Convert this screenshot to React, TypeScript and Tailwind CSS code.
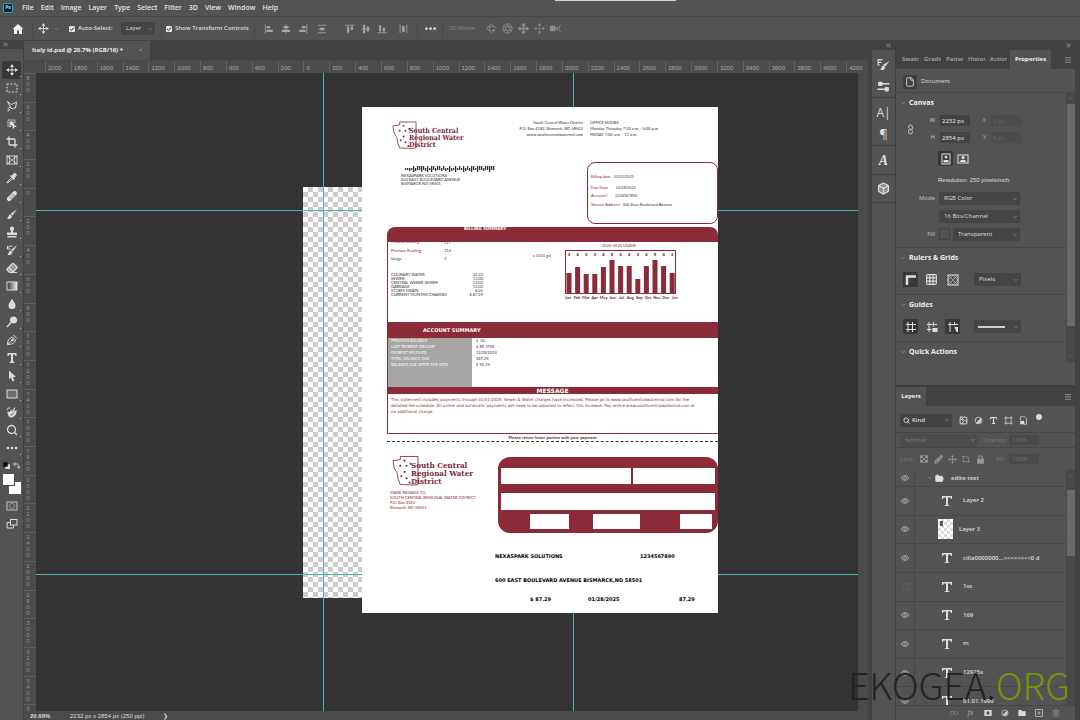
import React from "react";
import {
  Aperture,
  Box,
  Brush,
  ChevronDown,
  ChevronsLeft,
  ChevronsRight,
  Crop,
  Eraser,
  File,
  FolderOpen,
  Grid3x3,
  Image as ImageIcon,
  Link,
  Lock,
  Menu,
  Move,
  Rotate3d,
  Search,
  Trash2,
  Type,
} from "lucide-react";

const ui = "font-['Open_Sans','Noto_Sans',sans-serif]";
const small = "font-['Lato','Liberation_Sans',sans-serif]";

function Icon({ children, size = "size-3" }: { children: React.ReactNode; size?: string }) {
  return (
    <svg viewBox="0 0 24 24" fill="none" stroke="currentColor" strokeWidth="2" className={size} aria-hidden="true">
      {children}
    </svg>
  );
}

const F = { fill: "currentColor", stroke: "none" };

const MoveIcon = ({ size }: { size?: string }) => (
  <Icon size={size}>
    <path d="M12 5v14M5 12h14" />
    <path {...F} d="M12 0l4 6H8zM12 24l4-6H8zM0 12l6-4v8zM24 12l-6-4v8z" />
  </Icon>
);

const tools: { name: string; icon: React.ReactNode; active?: boolean }[] = [
  { name: "Move", active: true, icon: <MoveIcon /> },
  { name: "Marquee", icon: <Icon><rect x="2" y="4" width="20" height="16" strokeDasharray="4 3" /></Icon> },
  { name: "Lasso", icon: <Icon><path d="M3 3l8 6 10-5-2 12-9 1-7-14zM8 15c-5 0-5 4-1 4 0 2-2 3-4 3" /></Icon> },
  { name: "Object selection", icon: <Icon><path d="M10 17H4V4h14v6" strokeDasharray="4 2" /><rect {...F} x="7" y="7" width="8" height="8" /><path {...F} d="M12 9l10 9h-5l-3 5z" /></Icon> },
  { name: "Crop", icon: <Crop className="size-3" strokeWidth={2.6} /> },
  { name: "Frame", icon: <Icon><rect x="2" y="4" width="20" height="16" /><path d="M2 4l20 16M22 4L2 20M7 4v16M17 4v16" strokeWidth="1.5" /></Icon> },
  { name: "Eyedropper", icon: <Icon><path {...F} d="M15 3c3-3 8 1 6 5l-4 4 1 2-2 2-8-8 2-2 2 1z" /><path d="M11 11l-7 7-2 4 4-2 8-7" /></Icon> },
  { name: "Healing brush", icon: <Icon><path {...F} d="M2 16L15 3c3-3 9 3 6 6L8 22c-3 2-8-3-6-6z" /><path d="M10 11l4 4M13 8l4 4M7 14l4 4" stroke="#535353" strokeWidth="1.4" /></Icon> },
  { name: "Brush", icon: <Icon><path {...F} d="M22 2l-9 13-4-3zM8 13l4 3c0 5-5 6-10 6 3-3 2-8 6-9z" /></Icon> },
  { name: "Clone stamp", icon: <Icon><path {...F} d="M8 3c2-3 7-2 8 1 1 4-3 5-2 9h8v5H2v-5h8c1-4-3-6-2-10zM3 20h18v3H3z" /></Icon> },
  { name: "History brush", icon: <Icon><path {...F} d="M22 2l-8 13-4-3zM9 13l4 3c0 5-5 6-10 6 3-3 2-8 6-9z" /><path d="M3 4v6h6M3 9c2-5 7-6 10-4" /></Icon> },
  { name: "Eraser", icon: <Eraser className="size-3" strokeWidth={2.4} fill="#999" /> },
  { name: "Gradient", icon: <Icon><defs><linearGradient id="tool-gradient"><stop stopColor="#333" /><stop offset="1" stopColor="#eee" /></linearGradient></defs><rect x="2" y="4" width="20" height="16" fill="url(#tool-gradient)" /></Icon> },
  { name: "Blur", icon: <Icon><path {...F} d="M12 1c3 7 7 9 7 14a7 7 0 0 1-14 0c0-5 4-7 7-14z" /></Icon> },
  { name: "Dodge", icon: <Icon><circle {...F} cx="15" cy="8" r="7" /><path d="M10 13l-8 9" strokeWidth="3" /></Icon> },
  { name: "Pen", icon: <Icon><path d="M3 21c0-8 3-13 10-15l6 6c-2 7-8 9-16 9zM3 21l9-8M15 2l7 7" /><circle {...F} cx="13" cy="12" r="2.5" /></Icon> },
  { name: "Text", icon: <Icon><path {...F} d="M3 2h18v6h-2l-1-3h-4v14l3 1v2H7v-2l3-1V5H6L5 8H3z" /></Icon> },
  { name: "Path selection", icon: <Icon><path {...F} d="M6 1l14 13h-6l3 7-4 2-3-8-4 4z" /></Icon> },
  { name: "Rectangle", icon: <Icon><rect x="2" y="4" width="20" height="16" fill="#6b6b6b" /></Icon> },
  { name: "Rotate view", icon: <Icon><path {...F} d="M3 11l5 1 2-6 2 5 5-9 1 2-2 7 5-3c1 7-3 14-10 15-5 0-8-5-8-12z" /><path d="M8 4C5 3 3 5 2 8M8 17c3 1 6-1 7-4" stroke="#dcdcdc" /><path d="M9 18c4 0 6-3 6-5" stroke="#535353" /></Icon> },
  { name: "Zoom", icon: <Search className="size-3" strokeWidth={2.6} /> },
  { name: "More tools", icon: <Icon><circle {...F} cx="4" cy="12" r="2.6" /><circle {...F} cx="12" cy="12" r="2.6" /><circle {...F} cx="20" cy="12" r="2.6" /></Icon> },
];

function Sep() {
  return <span className="h-4 w-px shrink-0 bg-[#484848]" />;
}

function Check({ label }: { label: string }) {
  return (
    <label className="flex items-center gap-[3px] text-[6px] font-semibold whitespace-nowrap">
      <span className="relative flex size-[6px]">
        <input type="checkbox" defaultChecked className="size-[6px] appearance-none rounded-[1px] bg-[#e6e6e6]" />
        <svg viewBox="0 0 6 6" className="pointer-events-none absolute inset-0" aria-hidden="true">
          <path d="M1 3l1.500 1.500L5 1.500" fill="none" stroke="#333" />
        </svg>
      </span>
      <span>{label}</span>
    </label>
  );
}

function Select({ value, label, className = "" }: { value: string; label: string; className?: string }) {
  return (
    <span className={`relative flex h-[13px] items-center rounded-[1px] bg-[#454545] ${className}`}>
      <select aria-label={label} className="h-full w-full appearance-none bg-transparent pl-[5px] text-[6px] leading-[13px] outline-none">
        <option>{value}</option>
      </select>
      <ChevronDown className="pointer-events-none absolute right-[2px] size-[6px] text-[#aaa]" />
    </span>
  );
}

const alignIcons: [string, React.ReactNode][] = [
  ["Align left", <><path d="M3 1v22" /><path {...F} d="M6 5h9v5H6zM6 14h15v5H6z" /></>],
  ["Align center", <><path d="M12 1v22" /><path {...F} d="M6 5h12v5H6zM2 14h20v5H2z" /></>],
  ["Align right", <><path d="M21 1v22" /><path {...F} d="M9 5h9v5H9zM3 14h15v5H3z" /></>],
  ["Distribute", <><path d="M2 3h20M2 21h20" /><path {...F} d="M6 9h12v6H6z" /></>],
  ["Align top", <><path d="M1 3h22" /><path {...F} d="M5 6h5v15H5zM14 6h5v9h-5z" /></>],
  ["Align middle", <><path d="M1 12h22" /><path {...F} d="M5 2h5v20H5zM14 6h5v12h-5z" /></>],
  ["Align bottom", <><path d="M1 21h22" /><path {...F} d="M5 3h5v15H5zM14 9h5v9h-5z" /></>],
  ["Distribute horizontally", <><path d="M5 2v20M21 2v20" /><path {...F} d="M10 5h6v14h-6z" /></>],
];

function AlignButton({ index }: { index: number }) {
  return (
    <button aria-label={alignIcons[index][0]} className="flex w-4 justify-center text-[#a6a6a6]">
      <Icon size="size-[10px]">{alignIcons[index][1]}</Icon>
    </button>
  );
}

function TopBars() {
  const menus = ["File", "Edit", "Image", "Layer", "Type", "Select", "Filter", "3D", "View", "Window", "Help"];
  return (
    <header className="shrink-0 bg-[#535353]">
      <nav className="relative flex h-[17px] items-center border-b border-[#484848] pl-[3px]">
        <span className="flex size-[10px] items-center justify-center rounded-[2px] border border-[#2aa5b5] bg-[#001d33] text-[5px] font-bold text-[#8fd8ff]">Ps</span>
        <ul className="ml-[9px] flex gap-[7px] text-[7px] font-semibold text-[#e4e4e4]">
          {menus.map((m) => (
            <li key={m} className="flex">
              <button>{m}</button>
            </li>
          ))}
        </ul>
        <span className="absolute top-0 left-1/2 ml-[15px] h-px w-[121px] bg-[#d5d5d5]" />
      </nav>
      <div className="flex h-[23px] items-center">
        <button aria-label="Home" className="flex w-[32px] justify-center pl-[3px] text-[#f2f2f2]">
          <Icon size="size-[12px]"><path {...F} d="M12 2L1 12h3v10h6v-7h4v7h6V12h3z" /></Icon>
        </button>
        <Sep />
        <button aria-label="Move tool options" className="ml-[5px] flex w-[28px] items-center gap-[5px]">
          <MoveIcon size="size-[11px]" />
          <ChevronDown className="size-[6px] text-[#999]" />
        </button>
        <div className="ml-[3px] w-[52px]"><Check label="Auto-Select:" /></div>
        <Select value="Layer" label="Auto-select target" className="w-[34px]" />
        <span className="w-[6px]" />
        <Sep />
        <div className="ml-[4px] w-[88px]"><Check label="Show Transform Controls" /></div>
        <Sep />
        <div className="ml-[6px] flex gap-px">
          <AlignButton index={0} /><AlignButton index={1} /><AlignButton index={2} />
        </div>
        <div className="ml-[3px] flex"><AlignButton index={3} /></div>
        <div className="ml-[12px] flex"><AlignButton index={4} /><AlignButton index={5} /><AlignButton index={6} /></div>
        <div className="mr-[6px] ml-[5px] flex"><AlignButton index={7} /></div>
        <Sep />
        <button aria-label="More options" className="flex w-[24px] justify-center">
          <Icon size="size-[11px]"><circle {...F} cx="3" cy="12" r="3" /><circle {...F} cx="12" cy="12" r="3" /><circle {...F} cx="21" cy="12" r="3" /></Icon>
        </button>
        <Sep />
        <span className="ml-[6px] w-[34px] text-[6px] text-[#858585]">3D Mode:</span>
        <div className="flex text-[#8b8b8b]">
          <button aria-label="Orbit" className="flex w-4 justify-center"><Rotate3d className="size-[11px]" /></button>
          <button aria-label="Roll" className="flex w-4 justify-center"><Aperture className="size-[11px]" /></button>
          <button aria-label="Pan" className="flex w-4 justify-center"><Move className="size-[11px]" strokeWidth={3} /></button>
          <button aria-label="Slide" className="flex w-4 justify-center">
            <Icon size="size-[11px]"><path {...F} d="M12 0l4 6H8zM12 24l4-6H8zM0 12l6-4v8zM24 12l-6-4v8zM10 10h4v4h-4z" /></Icon>
          </button>
          <button aria-label="Camera" className="flex w-4 justify-center">
            <Icon size="size-[11px]"><path {...F} d="M0 6h12v12H0zM12 12l5-5v10z" /><path d="M23 4l-4 8 4 8" /></Icon>
          </button>
        </div>
      </div>
    </header>
  );
}

function Toolbar() {
  return (
    <aside className="flex w-[24px] shrink-0 flex-col border-r border-[#404040] bg-[#535353]">
      <div className="flex h-[9px] items-center bg-[#424242] pl-[2px]">
        <ChevronsRight className="size-[7px] text-[#ccc]" />
      </div>
      <div className="h-[12px]" />
      {tools.map((t) => (
        <button
          key={t.name}
          aria-label={t.name}
          className={`relative mx-[2px] flex h-[18px] items-center justify-center rounded-[2px] text-[#dcdcdc] ${t.active ? "bg-[#383838]" : ""}`}
        >
          {t.icon}
          <span className="absolute right-0 bottom-[2px] size-px bg-[#bbb]" />
        </button>
      ))}
      <div className="flex h-[16px] items-center justify-around px-[2px]">
        <Icon size="size-[7px]"><rect {...F} x="8" y="8" width="16" height="16" /><rect x="1" y="1" width="15" height="15" fill="#000" stroke="none" /></Icon>
        <Icon size="size-[7px]"><path d="M3 7h12q5 0 5 12M8 1L2 7l6 6M14 16l6 6 4-6" strokeWidth="3" /></Icon>
      </div>
      <div className="relative ml-[3px] h-[24px] w-[18px]">
        <span className="absolute right-0 bottom-[3px] size-[12px] bg-white" />
        <span className="absolute top-[1px] left-0 size-[12px] border-r border-b border-[#444] bg-white" />
      </div>
      <button aria-label="Quick mask" className="flex h-[18px] items-center justify-center text-[#c4c4c4]">
        <Icon><rect x="2" y="4" width="20" height="16" /><circle cx="12" cy="12" r="5" strokeDasharray="2 1" /></Icon>
      </button>
      <button aria-label="Screen mode" className="flex h-[18px] items-center justify-center text-[#dcdcdc]">
        <Icon><rect x="9" y="3" width="13" height="11" /><path d="M15 14v6H2V9h7" /></Icon>
      </button>
    </aside>
  );
}

function Logo({ large = false }: { large?: boolean }) {
  return (
    <div className="relative flex text-[#7d2632]">
      <svg viewBox="0 0 26 29" className={large ? "h-[31px] w-[27px]" : "h-[28px] w-[25px]"} aria-hidden="true">
        <path d="M1 5l7-1V1h17v27l-4 .5-13-.5-2-5-1-6-3-5z" fill="none" stroke="#7d2632" strokeWidth=".8" />
        <g fill="#7d2632">
          <circle cx="12" cy="5" r="1" /><circle cx="8" cy="10" r="1" /><circle cx="14" cy="10" r="1" />
          <circle cx="18" cy="8" r="1" /><circle cx="12" cy="16" r="1" /><circle cx="9" cy="20" r="1" />
          <circle cx="14" cy="22" r="1" /><circle cx="17" cy="26" r="1" />
        </g>
      </svg>
      <div
        className={`absolute font-['DejaVu_Serif_Condensed','DejaVu_Serif',serif] font-bold whitespace-nowrap ${
          large ? "top-[6px] left-[19px] text-[8px] leading-[8px]" : "top-[6px] left-[17px] text-[7px] leading-[7px]"
        }`}
      >
        <p>South Central</p>
        <p>Regional Water</p>
        <p>District</p>
      </div>
    </div>
  );
}

const usage = [
  ["Jan", 3, 20], ["Feb", 4, 26], ["Mar", 3, 19], ["Apr", 3, 19], ["May", 4, 26], ["Jun", 5, 33], ["Jul", 4, 27],
  ["Aug", 4, 27], ["Sep", 2, 14], ["Oct", 4, 27], ["Nov", 5, 33], ["Dec", 4, 27], ["Jan", 3, 20],
] as const;

function UsageChart() {
  return (
    <svg viewBox="0 0 116 60" className="h-[60px] w-[116px] font-['DejaVu_Sans',sans-serif]" role="img" aria-label="Usage by month">
      <text x="56" y="5" fontSize="4" textAnchor="middle" fill="#8b2b38" className={small}>2024-2025 USAGE</text>
      <rect x="2.500" y="8.500" width="110" height="43" fill="none" stroke="#8b2b38" />
      {usage.map(([month, value, height], i) => (
        <g key={i} fill="#8b2b38">
          <rect x={3.5 + i * 8.6} y={51 - height} width="5" height={height} />
          <text x={6 + i * 8.6} y="14" fontSize="4" fontWeight="700" textAnchor="middle">{value}</text>
          <text x={5 + i * 8.9} y="57" fontSize="4" fontWeight="700" textAnchor="middle" fill="#5c1f28" className={small}>{month}</text>
        </g>
      ))}
    </svg>
  );
}

const barcode = [2, 2, 3, 2, 5, 3, 6, 6, 5, 6, 3, 5, 2, 5, 6, 3, 6, 6, 3, 6, 3, 2, 5, 3, 2, 5, 2, 6, 2, 5, 3, 6, 3, 5, 6, 2, 5, 6, 6, 3, 6, 6, 5, 6, 6];

function Paper() {
  return (
    <article className={`absolute top-[34px] left-[326px] w-[356px] overflow-hidden bg-white pb-[11px] text-[4px] text-[#333] ${small}`}>
      <div className="flex h-[55px] pt-[14px]">
        <div className="w-[120px] pl-[30px]"><Logo /></div>
        <div className="-mt-[1px] w-[101px] text-right leading-[6px] whitespace-nowrap">
          <p>South Central Water District</p>
          <p>P.O. Box 4182, Bismarck, ND 58502</p>
          <p>www.southcentralwatermd.com</p>
        </div>
        <div className="-mt-[1px] pl-[7px] leading-[6px] whitespace-nowrap">
          <p>OFFICE HOURS</p>
          <p>Monday-Thursday 7:30 a.m. - 5:00 p.m.</p>
          <p>FRIDAY 7:00 a.m. - 11 a.m.</p>
        </div>
      </div>
      <div className="flex justify-between">
        <div className="pt-[3px] pl-[39px]">
          <svg viewBox="0 0 91 8" className="ml-[4px] h-[8px] w-[91px]" aria-hidden="true">
            {barcode.map((h, i) => (
              <rect key={i} x={i * 2} y={h > 4 ? 1 : 3} width="1.300" height={h > 5 ? 4 : h > 3 ? 6 : h} fill="#333" />
            ))}
          </svg>
          <address className="pt-px leading-[4px] not-italic">
            <p>NEXASPARK SOLUTIONS</p>
            <p>600 EAST BOULEVARD AVENUE</p>
            <p>BISMARCK ND 58501</p>
          </address>
        </div>
        <dl className="grid h-[62px] w-[131px] content-start rounded-[8px] border border-[#8b2b38] pt-[11px] pl-[3px] font-['Liberation_Sans',sans-serif] [&>div]:flex [&>div]:gap-[3px] [&_dt]:text-[#8b2b38]">
          <div className="h-[11px]"><dt className="w-[20px]">Billing date</dt><dd>01/01/2025</dd></div>
          <div className="h-[8px]"><dt className="w-[22px]">Due Date</dt><dd>01/28/2025</dd></div>
          <div className="h-[9px]"><dt className="w-[21px]">Account#</dt><dd>1234567890</dd></div>
          <div><dt>Service Address</dt><dd>600 East Boulevard Avenue</dd></div>
        </dl>
      </div>
      <div className="mt-[3px] ml-[25px]">
        <section>
          <h2 className="h-[15px] overflow-hidden rounded-t-[8px] bg-[#8b2b38] pl-[77px] font-['DejaVu_Sans',sans-serif] text-[4px] leading-[3px] font-bold text-white">BILLING SUMMARY</h2>
          <div className="flex h-[80px] justify-between border-l border-[#8b2b38]">
            <div className="w-[110px] pl-[3px]">
              <dl className="grid h-[31px] grid-cols-[53px_1fr] content-start overflow-hidden leading-[8px]">
                <dt className="-mt-[4px] text-[#8b2b38]">Present Reading</dt><dd className="-mt-[3px]">117</dd>
                <dt className="text-[#8b2b38]">Previous Reading</dt><dd>114</dd>
                <dt>Usage</dt><dd>3</dd>
              </dl>
              <table className="w-[92px] leading-[4px] [&_td]:p-0 [&_td:last-child]:text-right">
                <tbody>
                  <tr><td>CULINARY WATER</td><td>32.22</td></tr>
                  <tr><td>SEWER</td><td>13.00</td></tr>
                  <tr><td>CENTRAL WEBER SEWER</td><td>13.02</td></tr>
                  <tr><td>GARBAGE</td><td>13.00</td></tr>
                  <tr><td>STORM DRAIN</td><td>6.05</td></tr>
                  <tr><td>CURRENT MONTHS CHARGES</td><td>$ 87.29</td></tr>
                </tbody>
              </table>
            </div>
            <div className="mr-[39px] flex gap-[12px]">
              <span className="pt-[11px] text-[#8b2b38]">x 1000 gal</span>
              <UsageChart />
            </div>
          </div>
        </section>
        <section>
          <h2 className="bg-[#8b2b38] pl-[36px] font-['DejaVu_Sans',sans-serif] text-[5px] leading-[16px] font-bold text-white">ACCOUNT SUMMARY</h2>
          <dl className="grid h-[49px] grid-cols-[84px_1fr] border-l border-[#8b2b38] font-['DejaVu_Sans_Condensed','DejaVu_Sans',sans-serif] leading-[6px]">
            <div className="bg-[#a6a6a6] pl-[3px] whitespace-nowrap text-white">
              <dt>PREVIOUS BALANCE</dt><dt>LAST PAYMENT AMOUNT</dt><dt>PAYMENT RECEIVED</dt><dt>TOTAL BALANCE DUE</dt><dt>BALANCE DUE AFTER THE 18TH</dt>
            </div>
            <div className="pl-[4px]">
              <dd>$ .00</dd><dd>$ 85.3705</dd><dd>12/28/2024</dd><dd>$87.29</dd><dd>$ 92.29</dd>
            </div>
          </dl>
        </section>
        <section>
          <h2 className="bg-[#8b2b38] text-center font-['DejaVu_Sans',sans-serif] text-[6px] leading-[7px] font-bold text-white">MESSAGE</h2>
          <p className="h-[40px] border-b border-l border-[#8b2b38] pt-[3px] pl-[3px] font-['DejaVu_Sans',sans-serif] leading-[6px] whitespace-nowrap text-[#8b2b38]">
            This statement includes payments through 01/01/2025. Sewer &amp; Water charges have increased. Please go to www.southcentralwatermd.com for the
            <br />
            detailed fee schedule. All online and automatic payments will need to be adjusted to reflect this increase. Pay online www.southcentralwatermd.com at
            <br />
            no additional charge.
          </p>
        </section>
        <p className="border-b border-dashed border-[#333] text-center font-['Liberation_Sans',sans-serif] leading-[7px] font-bold text-[#5c1f28]">Please return lower portion with your payment</p>
      </div>
      <div className="flex justify-between pt-[14px]">
        <div className="-mt-px pl-[28px]">
          <div className="pl-[2px]"><Logo large /></div>
          <address className="mt-[4px] leading-[5px] text-[#8b2b38] not-italic">
            <p>MAKE PAYABLE TO:</p>
            <p>SOUTH CENTRAL REGIONAL WATER DISTRICT</p>
            <p>P.O. Box 4182</p>
            <p>Bismarck, ND 58502</p>
          </address>
        </div>
        <div className="mt-[1px] h-[76px] w-[220px] rounded-[12px] bg-[#8b2b38] px-[3px] pt-[11px]">
          <div className="flex h-[16px] gap-[2px]"><span className="flex-[130] bg-white" /><span className="flex-[82] bg-white" /></div>
          <div className="mt-[9px] h-[17px] bg-white" />
          <div className="mt-[4px] flex h-[15px] pl-[29px]">
            <span className="w-[39px] bg-white" /><span className="ml-[24px] w-[47px] bg-white" /><span className="ml-[40px] w-[32px] bg-white" />
          </div>
        </div>
      </div>
      <div className="flex flex-col pl-[133px] font-['DejaVu_Sans',sans-serif] text-[5px] leading-[6px] font-bold whitespace-nowrap text-black">
        <p className="mt-[20px] flex"><span className="w-[145px]">NEXASPARK SOLUTIONS</span><span>1234567890</span></p>
        <p className="mt-[18px]">600 EAST BOULEVARD AVENUE BISMARCK,ND 58501</p>
        <p className="mt-[13px] flex pl-[35px]"><span className="w-[58px]">$ 87.29</span><span className="w-[91px]">01/28/2025</span><span>87.29</span></p>
      </div>
    </article>
  );
}

const horizontal = Array.from({ length: 32 }, (_, i) => Math.abs((i - 10) * 200));
const vertical = Array.from({ length: 23 }, (_, i) => Math.abs((i - 4) * 200));

function Workspace() {
  return (
    <main className="flex min-w-0 flex-1 flex-col bg-[#424242]">
      <div className="flex h-[20px] shrink-0 pt-[1px]">
        <div className="flex w-[126px] items-center gap-[4px] bg-[#535353] pl-[8px] text-[6px] font-bold whitespace-nowrap text-[#eee]">
          <span className="w-[103px]">Italy id.psd @ 20.7% (RGB/16) *</span>
          <button aria-label="Close document" className="font-normal text-[#aaa]">×</button>
        </div>
      </div>
      <div className="h-[13px] shrink-0 overflow-hidden border-t border-[#484848] bg-[#4c4c4c] pl-[21px] text-[#a8a8a8]">
        <div className="-mr-[4px] grid h-full grid-cols-[repeat(32,minmax(0,1fr))]">
          {horizontal.map((n, i) => (
            <span key={i} className="border-l border-[#626262] pl-[2px] font-['Liberation_Sans',sans-serif] text-[6px] leading-[14px]">{n}</span>
          ))}
        </div>
      </div>
      <div className="flex min-h-0 flex-1">
        <div className="flex w-[12px] shrink-0 flex-col overflow-hidden bg-[#4c4c4c]">
          <div className="-mb-[22px] grid flex-1 grid-rows-[repeat(23,minmax(0,1fr))] text-[6px] leading-[6px] text-[#999]">
            {vertical.map((n, i) => (
              <span key={i} className="flex flex-col items-center overflow-hidden border-t border-[#606060] pt-px pr-[4px]">
                {String(n).split("").map((d, j) => <span key={j}>{d}</span>)}
              </span>
            ))}
          </div>
        </div>
        <div className="relative flex-1 overflow-hidden bg-[#333]">
          <div className="absolute top-[114px] left-[267px] h-[411px] w-[70px] bg-white bg-[conic-gradient(#ccc_25%,#fff_0_50%,#ccc_0_75%,#fff_0)] bg-[length:10px_10px]" />
          <span className="absolute inset-y-0 left-[287px] w-px bg-[#4fb3b5]" />
          <span className="absolute inset-y-0 left-[537px] w-px bg-[#4fb3b5]" />
          <span className="absolute inset-x-0 top-[137px] h-px bg-[#4fb3b5]" />
          <span className="absolute inset-x-0 top-[501px] h-px bg-[#4fb3b5]" />
          <Paper />
        </div>
        <div className="w-[10px] shrink-0 bg-[#4a4a4a]" />
      </div>
      <footer className="flex h-[9px] shrink-0 items-center overflow-hidden bg-[#4a4a4a] pt-[2px] pl-[6px] font-['Liberation_Sans',sans-serif] text-[6px] leading-[7px] text-[#ddd]">
        <span className="w-[40px] font-bold">20.66%</span>
        <span className="w-[93px]">2232 px x 2854 px (250 ppi)</span>
        <span>❯</span>
      </footer>
    </main>
  );
}

function IconDock() {
  const group = "flex flex-col items-center justify-around border-b border-[#3f3f3f] text-[#dcdcdc]";
  return (
    <aside className="ml-[3px] w-[25px] shrink-0 border-x border-[#3f3f3f] bg-[#535353]">
      <div className="flex h-[10px] items-center justify-end bg-[#424242] pr-[3px]"><ChevronsLeft className="size-[7px] text-[#ccc]" /></div>
      <div className={`h-[48px] pt-[4px] ${group}`}>
        <button aria-label="Brush settings"><Icon size="size-[13px]"><path d="M1 3h9M1 8h7M1 13h4M2 3v10" /><path {...F} d="M23 5l-8 11-4-3zM11 14l4 3c0 4-4 6-9 5 3-2 2-7 5-8z" /></Icon></button>
        <button aria-label="Adjustments"><Icon size="size-[13px]"><path d="M9 7h14M1 17h14" strokeWidth="3" /><rect {...F} x="2" y="3" width="8" height="8" rx="2" /><rect {...F} x="14" y="13" width="8" height="8" rx="2" /></Icon></button>
      </div>
      <div className={`h-[48px] pt-[4px] ${group}`}>
        <button className="text-[12px] leading-4" aria-label="Character">A|</button>
        <button className="text-[13px] leading-4" aria-label="Paragraph">¶</button>
      </div>
      <div className={`h-[29px] ${group}`}><button aria-label="Glyphs" className="pt-[2px] font-['Liberation_Serif',serif] text-[14px] leading-4 font-bold italic">A</button></div>
      <div className={`h-[28px] ${group}`}><button aria-label="3D"><Box className="size-[13px]" strokeWidth={2.4} fill="#8a8a8a" /></button></div>
    </aside>
  );
}

function Field({ label, value, id, dim = false }: { label: string; value: string; id: string; dim?: boolean }) {
  return (
    <div className="flex items-center">
      <label htmlFor={id} className={`text-right text-[6px] ${dim ? "w-[12px] text-[#aaa]" : "w-[12px] text-[#c8c8c8]"}`}>{label}</label>
      <input
        id={id}
        defaultValue={value}
        disabled={dim}
        className={`ml-[5px] h-[11px] w-[30px] pl-[2px] text-[6px] ${dim ? "bg-[#4d4d4d] text-[#6a6a6a]" : "bg-[#434343] text-[#eee]"}`}
      />
    </div>
  );
}

function Heading({ children }: { children: React.ReactNode }) {
  return (
    <h3 className="flex h-[20px] items-center gap-[3px] text-[7px] font-bold text-[#eee]">
      <ChevronDown className="size-[6px] text-[#aaa]" />
      {children}
    </h3>
  );
}

function Square({ label, active, children }: { label: string; active?: boolean; children: React.ReactNode }) {
  return (
    <button aria-label={label} className={`flex size-[15px] items-center justify-center rounded-[1px] ${active ? "bg-[#383838]" : ""}`}>
      {children}
    </button>
  );
}

function Scroll({ thumb }: { thumb: string }) {
  return (
    <div className="flex w-[9px] shrink-0 flex-col items-center bg-[#484848]">
      <ChevronDown className="my-[3px] size-[5px] shrink-0 rotate-180 text-[#999]" />
      <span className={`w-[8px] bg-[#696969] ${thumb}`} />
      <span className="flex-1" />
      <ChevronDown className="my-[3px] size-[5px] shrink-0 text-[#888]" />
    </div>
  );
}

function Properties() {
  const tabs = ["Swatches", "Gradients", "Patterns", "History", "Actions"];
  return (
    <section className="flex h-[346px] shrink-0 flex-col border-b border-[#3f3f3f] bg-[#535353]">
      <div className="flex h-[10px] shrink-0 items-center justify-end bg-[#424242] pr-[3px]"><ChevronsRight className="size-[7px] text-[#ccc]" /></div>
      <div className="flex h-[19px] shrink-0 items-center bg-[#424242] pl-[6px] text-[6px] font-semibold text-[#aaa]">
        {tabs.map((t) => (
          <button key={t} className="mr-[5px] w-[17px] overflow-hidden text-left whitespace-nowrap">{t}</button>
        ))}
        <button className="-ml-[2px] h-full w-[41px] bg-[#535353] font-bold text-[#f0f0f0]">Properties</button>
        <button aria-label="Panel menu" className="ml-auto pr-[3px]"><Menu className="size-[8px]" /></button>
      </div>
      <div className="flex h-[24px] shrink-0 items-center gap-[4px] border-b border-[#484848] pt-[2px] pl-[7px]">
        <span className="flex size-[14px] items-center justify-center bg-[#404040]"><File className="size-[10px]" /></span>
        <span className="text-[6px]">Document</span>
      </div>
      <div className="flex">
        <div className="min-w-0 flex-1 [&>div]:border-b [&>div]:border-[#464646]">
          <div className="h-[155px] pl-[4px]">
            <Heading>Canvas</Heading>
            <div className="flex items-center pt-[2px] pl-[6px]">
              <Link className="mr-[8px] size-[9px] -rotate-45" />
              <div className="grid grid-cols-[51px_50px] gap-y-[6px]">
                <Field id="w" label="W" value="2232 px" /><Field id="x" label="X" value="0 px" dim />
                <Field id="h" label="H" value="2854 px" /><Field id="y" label="Y" value="0 px" dim />
              </div>
            </div>
            <div className="mt-[8px] flex gap-[2px] pl-[38px]">
              <Square label="Portrait" active><Icon size="size-[12px]"><rect x="4" y="2" width="16" height="20" /><circle {...F} cx="12" cy="8" r="3" /><path {...F} d="M7 19v-5h10v5z" /></Icon></Square>
              <Square label="Landscape"><Icon size="size-[12px]"><rect x="2" y="4" width="20" height="16" /><circle {...F} cx="12" cy="9" r="3" /><path {...F} d="M6 18c0-6 12-6 12 0z" /></Icon></Square>
            </div>
            <p className="mt-[8px] pl-[38px] font-['Liberation_Sans',sans-serif] text-[6px] leading-[12px]">Resolution: 250 pixels/inch</p>
            <div className="mt-[6px] grid grid-cols-[35px_81px] items-center gap-x-[4px] gap-y-[5px] text-[6px]">
              <span className="text-right text-[#c8c8c8]">Mode</span>
              <Select value="RGB Color" label="Mode" />
              <span />
              <Select value="16 Bits/Channel" label="Depth" />
              <span className="text-right text-[#c8c8c8]">Fill</span>
              <div className="flex gap-[3px]">
                <span className="h-[12px] w-[11px] border border-[#444]" />
                <Select value="Transparent" label="Fill" className="flex-1" />
              </div>
            </div>
          </div>
          <div className="h-[47px] pl-[4px]">
            <Heading>Rulers &amp; Grids</Heading>
            <div className="flex items-center gap-[6px] pt-[4px] pl-[3px]">
              <Square label="Rulers" active><Icon><path d="M4 22V5h18" strokeWidth="5" /></Icon></Square>
              <Square label="Grid"><Grid3x3 className="size-[13px]" /></Square>
              <Square label="Pixel grid"><Icon><rect x="2" y="2" width="20" height="20" /><path d="M2 12L12 2M2 22L22 2M12 22l10-10M2 12l10 10M2 2l20 20M12 2l10 10" strokeWidth="1" /></Icon></Square>
              <Select value="Pixels" label="Units" className="ml-[8px] w-[47px]" />
            </div>
          </div>
          <div className="h-[47px] pl-[4px]">
            <Heading>Guides</Heading>
            <div className="flex items-center gap-[6px] pt-[4px] pl-[3px]">
              <Square label="Show guides" active><Icon><path d="M6 2v20M15 2v20M2 7h20M2 17h20" /></Icon></Square>
              <Square label="Lock guides"><Icon><path d="M6 2v20M15 2v9M2 7h20M2 17h9" /><rect {...F} x="13" y="14" width="10" height="8" /></Icon></Square>
              <Square label="Smart guides" active><Icon><path d="M6 2v20M2 7h20M15 2v7" /><path {...F} d="M15 12h7v10h-3z" /></Icon></Square>
              <span className="relative ml-[8px] flex h-[13px] w-[47px] items-center bg-[#454545] pl-[4px]">
                <select aria-label="Guide style" className="absolute inset-0 appearance-none opacity-0"><option>Line</option></select>
                <span className="h-[2px] w-[27px] bg-[#d0d0d0]" />
                <ChevronDown className="absolute right-[2px] size-[6px] text-[#aaa]" />
              </span>
            </div>
          </div>
          <section className="pl-[4px]"><Heading>Quick Actions</Heading></section>
        </div>
        <Scroll thumb="h-[222px]" />
      </div>
    </section>
  );
}

const layers: [string, boolean, boolean][] = [
  ["Layer 2", true, false],
  ["Layer 3", true, true],
  ["cilla0000000...<<<<<<<<0 d", true, false],
  ["1ss", false, false],
  ["169", true, false],
  ["m", true, false],
  ["12925s", true, false],
  ["01.01.1990", true, false],
];

function Visibility({ on = true }: { on?: boolean }) {
  return (
    <button aria-label="Toggle visibility" className="flex h-full w-[19px] shrink-0 items-center justify-center border-r border-[#484848] text-[#bbb]">
      {on ? <Icon size="size-[8px]"><path d="M1 12c4-9 18-9 22 0-4 9-18 9-22 0z" strokeWidth="2.500" /><circle cx="12" cy="12" r="4" /></Icon> : <span className="size-[7px] border border-[#5e5e5e]" />}
    </button>
  );
}

function Layers() {
  const value = "flex h-[10px] w-[30px] items-center bg-[#4a4a4a] px-[3px] text-[6px] text-[#757575] outline-none";
  return (
    <section className="flex min-h-0 flex-1 flex-col bg-[#535353]">
      <div className="flex h-[20px] shrink-0 items-center justify-between border-t border-[#3f3f3f] bg-[#424242]">
        <h2 className="flex h-full w-[30px] items-center justify-center bg-[#535353] text-[6px] font-bold text-[#f0f0f0]">Layers</h2>
        <button aria-label="Panel menu" className="pr-[3px] text-[#bbb]"><Menu className="size-[8px]" /></button>
      </div>
      <div className="flex h-[27px] shrink-0 items-center border-b border-[#464646] pt-[2px] pl-[4px]">
        <span className="relative flex h-[13px] w-[52px] items-center bg-[#434343]">
          <Search className="absolute left-[3px] size-[7px]" strokeWidth={3} />
          <select aria-label="Layer filter" className="w-full appearance-none bg-transparent pl-[12px] text-[6px] font-semibold"><option>Kind</option></select>
          <ChevronDown className="absolute right-[2px] size-[6px] text-[#aaa]" />
        </span>
        <div className="ml-[4px] flex items-center [&>button]:flex [&>button]:w-[15px] [&>button]:justify-center">
          <button aria-label="Pixel layers"><ImageIcon className="size-[9px]" strokeWidth={2.6} /></button>
          <button aria-label="Adjustment layers"><Icon size="size-[9px]"><circle cx="12" cy="12" r="9" /><path {...F} d="M18 5A10 10 0 0 1 5 19z" /></Icon></button>
          <button aria-label="Text layers"><Type className="size-[9px]" strokeWidth={3} /></button>
          <button aria-label="Shape layers"><Icon size="size-[9px]"><path d="M5 1v22M19 1v22M1 5h22M1 19h22" /></Icon></button>
          <button aria-label="Smart objects"><Icon size="size-[9px]"><path d="M4 11V2h11l5 5v15h-7" /><rect {...F} x="3" y="13" width="11" height="9" /></Icon></button>
          <button aria-label="Filter switch" className="pb-[7px]"><span className="size-[6px] rounded-full bg-[#d8d8d8]" /></button>
        </div>
      </div>
      <div className="flex h-[15px] shrink-0 items-center border-b border-[#464646] pl-[4px] text-[6px] text-[#7c7c7c]">
        <Select value="Normal" label="Blend mode" className="w-[78px] !bg-[#4d4d4d]" />
        <label htmlFor="opacity" className="ml-[5px] w-[26px]">Opacity:</label>
        <input id="opacity" defaultValue="100%" className={value} />
      </div>
      <div className="flex h-[22px] shrink-0 items-center pl-[4px] text-[6px] text-[#7c7c7c]">
        <span className="w-[17px]">Lock:</span>
        <div className="flex w-[79px] items-center text-[#999] [&>button]:flex [&>button]:w-[14px] [&>button]:justify-center">
          <button aria-label="Lock transparency">
            <Icon size="size-[8px]"><rect x="2" y="2" width="20" height="20" /><path {...F} d="M2 2h7v7H2zM15 2h7v7h-7zM9 9h6v6H9zM2 15h7v7H2zM15 15h7v7h-7z" /></Icon>
          </button>
          <button aria-label="Lock pixels"><Brush className="size-[9px]" strokeWidth={3} /></button>
          <button aria-label="Lock position"><Move className="size-[9px]" /></button>
          <button aria-label="Lock artboard"><Icon size="size-[8px]"><path d="M4 1v22M1 5h15M20 8v15M4 20h19M14 11l6-6" /></Icon></button>
          <button aria-label="Lock all"><Icon size="size-[9px]"><rect {...F} x="3" y="10" width="18" height="13" /><path d="M7 11V7a5 5 0 0 1 10 0v4" strokeWidth="3" /></Icon></button>
        </div>
        <label htmlFor="fill" className="w-[13px]">Fill:</label>
        <input id="fill" defaultValue="100%" className={value} />
      </div>
      <div className="flex min-h-0 flex-1 overflow-hidden">
        <div className="flex min-w-0 flex-1 flex-col">
          <div className="flex h-[17px] shrink-0 items-center border-b border-[#484848]">
            <Visibility />
            <ChevronDown className="ml-[12px] size-[6px] text-[#aaa]" />
            <FolderOpen className="mx-[2px] size-[9px] text-[#e0e0e0]" fill="#e0e0e0" />
            <span className="ml-[5px] text-[6px] font-semibold">edite text</span>
          </div>
          <ul className="-mb-[11px] grid min-h-0 flex-1 grid-rows-[repeat(8,minmax(0,1fr))]">
            {layers.map(([name, on, picture]) => (
              <li key={name} className="flex items-center border-b border-[#484848]">
                <Visibility on={on} />
                {picture ? (
                  <span className="ml-[23px] h-[20px] w-[15px] bg-white bg-[conic-gradient(#ddd_25%,#fff_0_50%,#ddd_0_75%,#fff_0)] bg-[length:6px_6px]"><span className="mt-[2px] ml-[2px] block h-[5px] w-[3px] bg-[#67534b]" /></span>
                ) : (
                  <span className="ml-[24px] flex w-[16px] justify-center text-[#ddd]">
                    <Icon size="size-[12px]"><path {...F} d="M2 2h20v6h-2l-1-3h-5v15l3 1v1H7v-1l3-1V5H5L4 8H2z" /></Icon>
                  </span>
                )}
                <span className={`text-[6px] font-semibold whitespace-nowrap ${picture ? "ml-[6px]" : "ml-[8px]"}`}>{name}</span>
              </li>
            ))}
          </ul>
        </div>
        <Scroll thumb="mt-[9px] h-[66px] shrink-0" />
      </div>
      <footer className="relative z-10 flex h-[15px] shrink-0 items-center border-t border-[#464646] bg-[#535353] pl-[49px] text-[#d8d8d8] [&>button]:flex [&>button]:w-[17px] [&>button]:justify-center">
        <button aria-label="Link layers"><Link className="size-[8px] rotate-45 text-[#888]" /></button>
        <button aria-label="Layer style" className="text-[7px] text-[#aaa] italic">fx</button>
        <button aria-label="Add mask"><Icon size="size-[8px]"><path {...F} fillRule="evenodd" d="M1 3h22v18H1zM12 7a5 5 0 1 0 0 10 5 5 0 0 0 0-10z" /></Icon></button>
        <button aria-label="Adjustment"><Icon size="size-[8px]"><circle cx="12" cy="12" r="9" /><path {...F} d="M18 5A10 10 0 0 1 5 19z" /></Icon></button>
        <button aria-label="New group"><Icon size="size-[8px]"><path {...F} d="M1 3h9l3 4h10v14H1z" /></Icon></button>
        <button aria-label="New layer"><Icon size="size-[8px]"><rect x="2" y="2" width="20" height="20" /><path d="M12 7v10M7 12h10" /></Icon></button>
        <button aria-label="Delete layer"><Trash2 className="size-[8px] text-[#999]" /></button>
      </footer>
    </section>
  );
}

export default function App() {
  return (
    <div className={`relative flex h-screen flex-col overflow-hidden bg-[#424242] text-[#dedede] ${ui}`}>
      <TopBars />
      <div className="flex min-h-0 flex-1">
        <Toolbar />
        <Workspace />
        <IconDock />
        <aside className="mr-[5px] flex w-[179px] shrink-0 flex-col">
          <Properties />
          <Layers />
        </aside>
      </div>
      <p className="pointer-events-none absolute right-[10px] bottom-[14px] z-20 font-['Noto_Sans_CJK_SC',sans-serif] text-[37px] leading-[44px] font-light whitespace-nowrap text-[#222]">
        EKOGEA.<span className="text-[#76920f]">ORG</span>
      </p>
    </div>
  );
}
